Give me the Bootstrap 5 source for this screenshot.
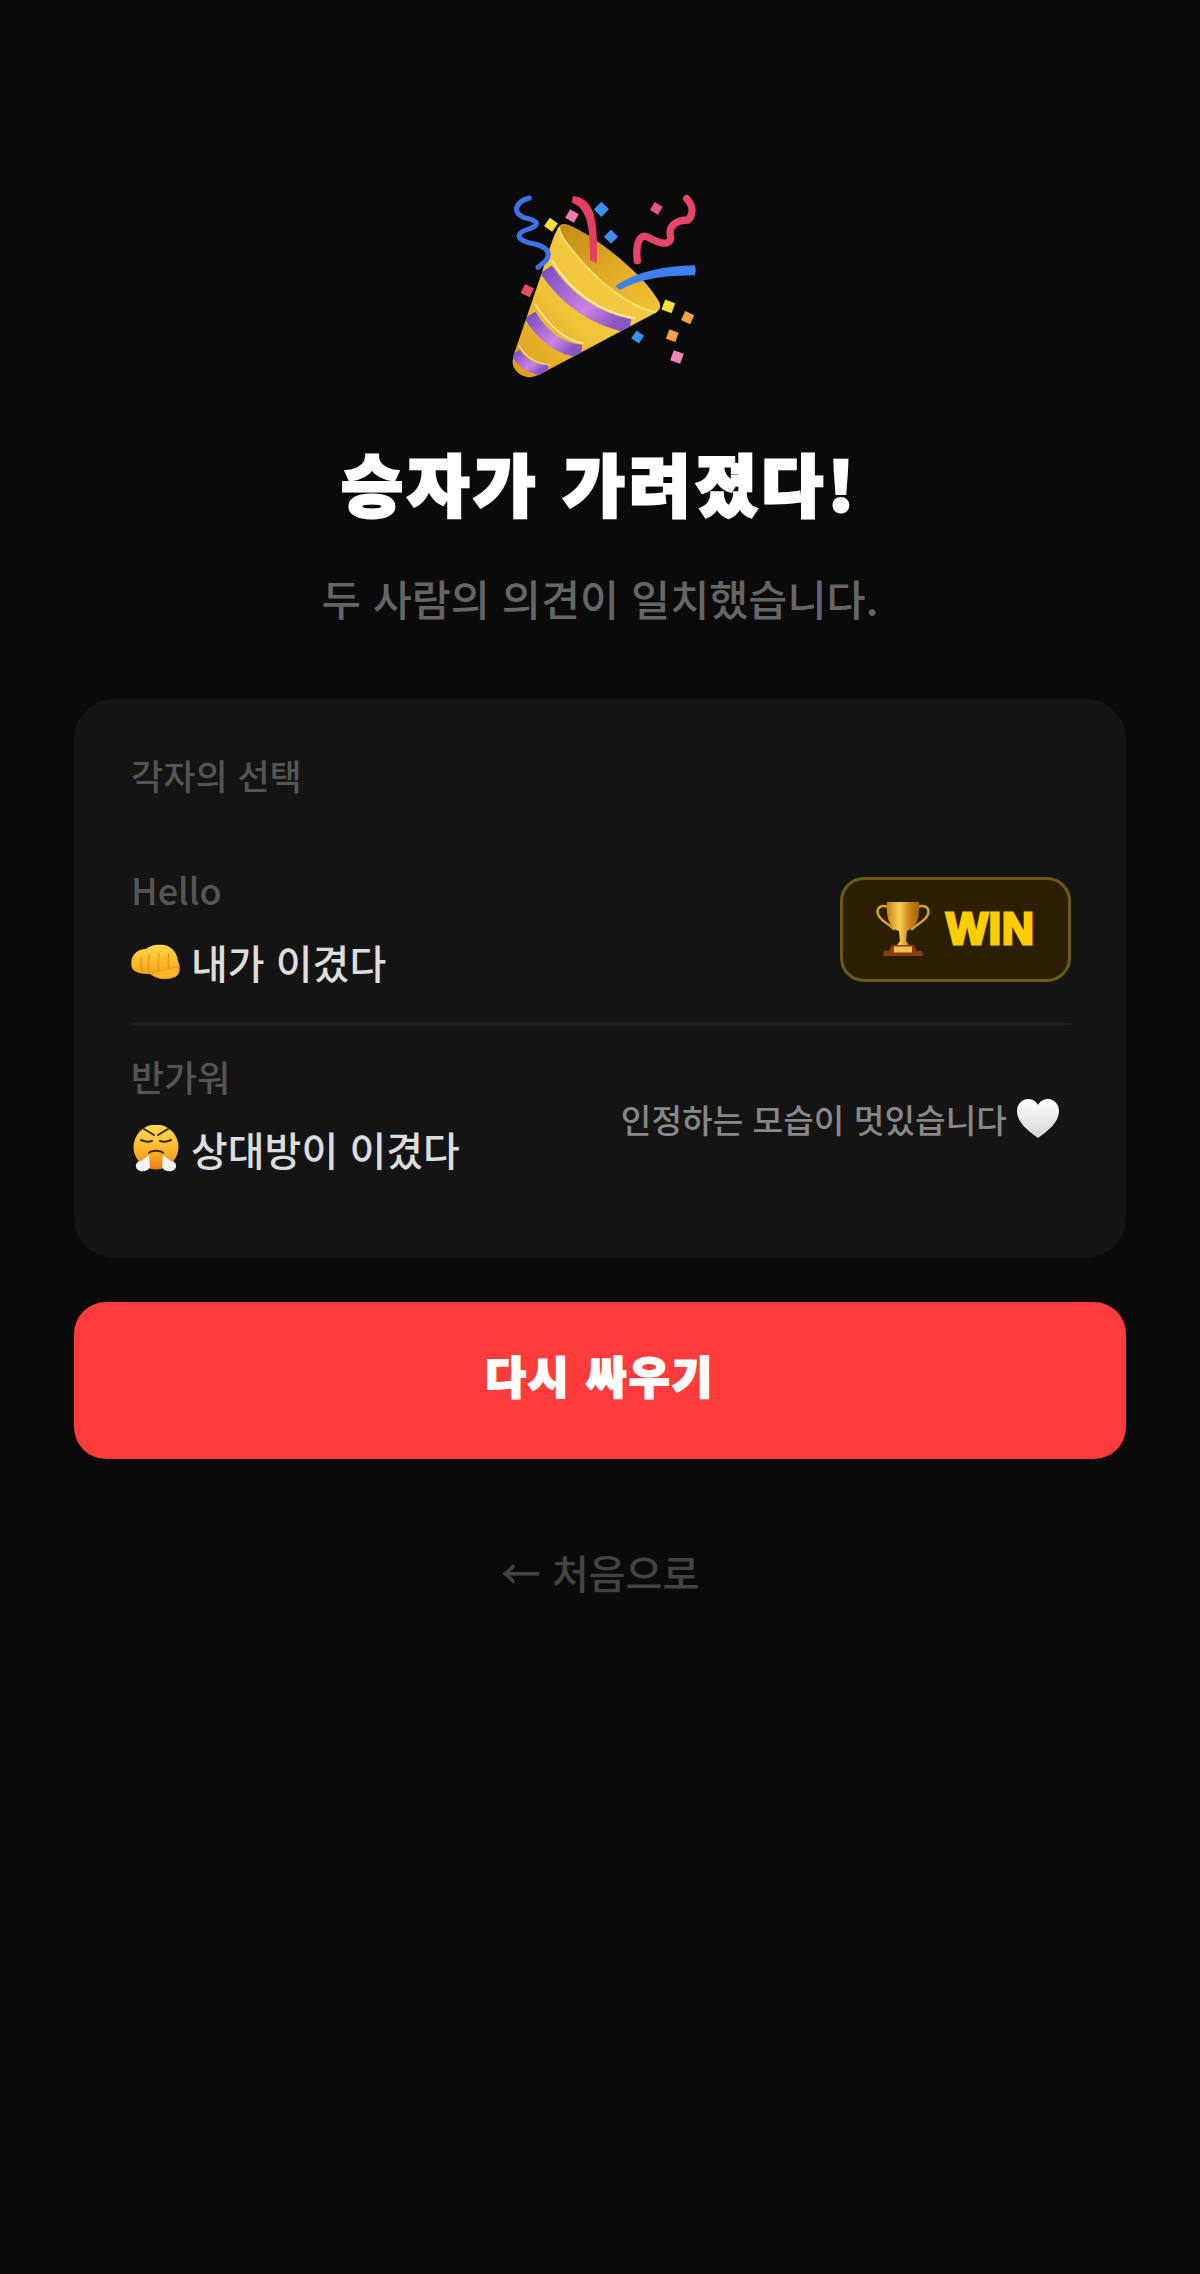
<!DOCTYPE html>
<html lang="ko">
<head>
<meta charset="utf-8">
<title>승자가 가려졌다</title>
<link rel="stylesheet" href="https://cdn.jsdelivr.net/npm/bootstrap@5.3.0/dist/css/bootstrap.min.css">
<style>
html,body{background:#0a0a0a;margin:0;}
body{font-family:"Noto Sans CJK KR","Noto Sans",sans-serif;min-height:2274px;}
.page-wrap{padding:150px 74px 0;}
.popper-art{display:block;width:320px;height:260px;margin:0 auto;}
.result-title{font-size:67px;line-height:80px;font-weight:900;color:#fff;margin:32px 0 0;-webkit-text-stroke:3px #fff;letter-spacing:4.5px;}
.result-sub{font-size:42.5px;line-height:60px;color:#666;font-weight:500;margin:46px 0 0;}
.pick-card{background:#141414;border:0;border-radius:40px;margin-top:71px;padding:51px 55px 48px 57px;}
.pick-label{font-size:35px;line-height:50px;color:#555;font-weight:500;margin-bottom:35px;}
.pick-row{padding:29px 0 33px;}
.pick-row + .pick-row{border-top:2px solid #222;padding-top:26px;}
.pick-name{font-size:36px;line-height:50px;color:#555;font-weight:500;}
.pick-choice{font-size:40px;line-height:56px;color:#ddd;font-weight:500;margin-top:20px;gap:10px;}
.win-tag{width:231px;height:105px;background:#2a2000;border:3px solid #6b5a12;border-radius:24px;gap:16px;color:#ffcc00;margin-top:4px;}
.win-word{font-family:"Liberation Sans",sans-serif;font-weight:700;font-size:44px;line-height:1;-webkit-text-stroke:3px #ffcc00;letter-spacing:1px;}
.cheer{font-size:33.3px;line-height:50px;color:#888;font-weight:500;gap:10px;padding-right:12px;margin-top:9px;}
.fight-btn{background:#ff3b3b;border:0;border-radius:32px;height:157px;width:100%;margin-top:44px;padding:0 0 12px;color:#fff;font-size:44px;font-weight:900;-webkit-text-stroke:2px #fff;letter-spacing:2.5px;}
.fight-btn:hover{background:#ff3b3b;color:#fff;}
.home-link{font-size:40px;line-height:60px;color:#444;font-weight:500;margin-top:83px;text-decoration:none;display:block;}
.home-link:hover{color:#444;}
</style>
</head>
<body>
<main class="page-wrap text-center">
  <svg class="popper-art" viewBox="0 0 960 780" aria-hidden="true">
    <defs>
      <linearGradient id="gold" x1="0" y1="1" x2="1" y2="0">
        <stop offset="0" stop-color="#d89a1c"/><stop offset=".4" stop-color="#f0c438"/><stop offset=".75" stop-color="#f4cc44"/><stop offset="1" stop-color="#d8a020"/>
      </linearGradient>
      <linearGradient id="inner" x1="0" y1="0" x2="1" y2="1">
        <stop offset="0" stop-color="#c08a18"/><stop offset=".5" stop-color="#e0aa24"/><stop offset="1" stop-color="#f4c436"/>
      </linearGradient>
      <linearGradient id="band" x1="0" y1="0" x2="1" y2=".7">
        <stop offset="0" stop-color="#7d4ec2"/><stop offset=".65" stop-color="#cc84e6"/><stop offset="1" stop-color="#8a55c4"/>
      </linearGradient>
      <clipPath id="coneclip"><path d="M358 228C345 245 330 290 305 370L222 612C212 642 220 664 250 678C268 686 290 680 320 662L640 492C664 480 664 466 655 452L640 430C600 370 480 270 400 232C385 224 368 218 358 228Z"/></clipPath>
    </defs>
    <path d="M358 228C345 245 330 290 305 370L222 612C212 642 220 664 250 678C268 686 290 680 320 662L640 492C664 480 664 466 655 452L640 430C600 370 480 270 400 232C385 224 368 218 358 228Z" fill="url(#gold)"/>
    <g clip-path="url(#coneclip)" fill="none">
      <path d="M335 330C390 420 470 485 585 505" stroke="#fff6c8" stroke-width="5" opacity=".85"/>
      <path d="M318 358C370 435 450 505 570 528" stroke="url(#band)" stroke-width="42"/>
      <path d="M285 462C325 525 370 570 430 580" stroke="#fff6c8" stroke-width="5" opacity=".75"/>
      <path d="M270 495C305 555 360 600 425 603" stroke="url(#band)" stroke-width="38"/>
      <path d="M236 585C255 620 285 640 330 645" stroke="#fff6c8" stroke-width="4" opacity=".75"/>
      <path d="M226 608C250 645 285 662 325 660" stroke="url(#band)" stroke-width="32"/>
    </g>
    <path d="M358 228C368 218 385 224 400 232C480 270 600 370 640 430L655 452C664 468 660 480 645 486C570 475 480 395 430 340C395 300 350 250 358 228Z" fill="url(#inner)"/>
    <path d="M358 232C356 255 395 300 430 340C480 395 570 475 648 486" fill="none" stroke="#f8dc6c" stroke-width="6"/>
    <path d="M398 138C425 140 450 155 462 195C472 240 472 290 470 340L450 330C450 280 448 235 438 205C428 178 415 165 396 158Z" fill="#e63e60"/>
    <path d="M525 408C590 365 670 348 765 346Q770 362 765 376C680 376 600 385 540 420Z" fill="#3f7ff0"/>
    <path d="M268 144C228 155 215 185 250 202C290 210 304 222 270 236C230 246 225 265 265 278C310 285 338 300 318 332L294 352" fill="none" stroke="#3d73e6" stroke-width="15" stroke-linecap="round"/>
    <path d="M592 332C586 280 600 248 625 262C660 282 692 288 692 262C682 225 712 210 745 210C762 190 758 165 740 146" fill="none" stroke="#e8446a" stroke-width="22" stroke-linecap="round" stroke-linejoin="round"/>
    <g>
      <rect x="468" y="162" width="32" height="32" transform="rotate(45 484 178)" fill="#3f8cf5"/>
      <rect x="498" y="245" width="30" height="30" transform="rotate(45 513 260)" fill="#3f8cf5"/>
      <rect x="579" y="547" width="28" height="28" transform="rotate(35 593 561)" fill="#3f8cf5"/>
      <rect x="381" y="183" width="30" height="30" transform="rotate(30 396 198)" fill="#ee7cab"/>
      <rect x="635" y="161" width="28" height="28" transform="rotate(30 649 175)" fill="#e8557f"/>
      <rect x="318" y="209" width="30" height="30" transform="rotate(35 333 224)" fill="#f8e03c"/>
      <rect x="247" y="407" width="30" height="30" transform="rotate(25 262 422)" fill="#e84b5e"/>
      <rect x="669" y="453" width="32" height="32" transform="rotate(20 685 469)" fill="#f8e03c"/>
      <rect x="728" y="488" width="30" height="30" transform="rotate(25 743 503)" fill="#f2a23c"/>
      <rect x="682" y="542" width="30" height="30" transform="rotate(20 697 557)" fill="#f2a23c"/>
      <rect x="695" y="605" width="32" height="32" transform="rotate(20 711 621)" fill="#f584b4"/>
    </g>
  </svg>
  <h1 class="result-title">승자가 가려졌다!</h1>
  <p class="result-sub">두 사람의 의견이 일치했습니다.</p>

  <section class="card pick-card text-start">
    <div class="pick-label">각자의 선택</div>
    <div class="pick-row d-flex justify-content-between align-items-center">
      <div>
        <div class="pick-name">Hello</div>
        <div class="pick-choice d-flex align-items-center">
          <svg width="50" height="36" viewBox="0 0 50 36" aria-hidden="true">
            <defs>
              <linearGradient id="fistg" x1="0" y1="0" x2="0" y2="1"><stop offset="0" stop-color="#ffd94a"/><stop offset=".6" stop-color="#fcb424"/><stop offset="1" stop-color="#f09a14"/></linearGradient>
            </defs>
            <path d="M1 14C4 7 10 5 15 5C19 1 27 0 33 1C40 2 46 8 47 17C50 24 49 30 44 33C36 36 26 36 19 30C12 30 3 29 1 24C0 21 0 17 1 14Z" fill="url(#fistg)"/>
            <path d="M10 14C9 19 10 24 11 27M18 11C17 18 17 24 18 29M28 10C27 17 27 23 28 28M38 10C37 16 37 20 38 25" fill="none" stroke="#e8921a" stroke-width="1.8" stroke-linecap="round" opacity=".75"/>
            <path d="M21 30C28 26 38 25 47 23C49 28 47 32 43 33C35 36 26 35 21 30Z" fill="#fdb426" stroke="#e8921a" stroke-width=".8"/>
          </svg>
          <span>내가 이겼다</span>
        </div>
      </div>
      <div class="win-tag d-flex align-items-center justify-content-center">
        <svg width="54" height="56" viewBox="0 0 54 56" aria-hidden="true">
          <defs>
            <linearGradient id="cupg" x1="0" y1="0" x2="1" y2="0"><stop offset="0" stop-color="#c48214"/><stop offset=".4" stop-color="#f8d050"/><stop offset=".7" stop-color="#c88414"/><stop offset="1" stop-color="#a8640c"/></linearGradient>
          </defs>
          <path d="M13 6C5 3 0 7 2 13C4 20 12 22 18 28M41 6C49 3 54 7 52 13C50 20 42 22 36 28" fill="none" stroke="#d8a030" stroke-width="2.6" stroke-linecap="round"/>
          <path d="M11 1H43C44 14 42 26 31 30L30 40L33 44H21L24 40L23 30C12 26 10 14 11 1Z" fill="url(#cupg)"/>
          <path d="M16 44H38L41 50H46L47 55H7L8 50H13Z" fill="#8a3e10"/>
          <rect x="18" y="45.500" width="18" height="6" fill="#f0c050"/>
        </svg>
        <span class="win-word">WIN</span>
      </div>
    </div>
    <div class="pick-row d-flex justify-content-between align-items-center">
      <div>
        <div class="pick-name">반가워</div>
        <div class="pick-choice d-flex align-items-center">
          <svg width="50" height="48" viewBox="0 0 50 48" aria-hidden="true">
            <defs>
              <linearGradient id="faceg" x1="0" y1="0" x2="0" y2="1"><stop offset="0" stop-color="#ffdc50"/><stop offset=".6" stop-color="#fbb42a"/><stop offset="1" stop-color="#f07c14"/></linearGradient>
            </defs>
            <circle cx="25" cy="22" r="22.500" fill="url(#faceg)"/>
            <path d="M13 4L23 10M37 4L27 10" stroke="#3e2510" stroke-width="2" stroke-linecap="round"/>
            <path d="M10 15C14 17 18 17 21 16M40 15C36 17 32 17 29 16" fill="none" stroke="#3e2510" stroke-width="2" stroke-linecap="round"/>
            <path d="M18 28C20 25 30 25 32 28" fill="none" stroke="#3e2510" stroke-width="2" stroke-linecap="round"/>
            <path d="M18 30C19 35 18 38 19 42C17 47 10 47 7 45C3 42 5 36 10 36C13 34 15 32 18 30ZM32 30C31 35 32 38 31 42C33 47 40 47 43 45C47 42 45 36 40 36C37 34 35 32 32 30Z" fill="#f4f4f4"/>
          </svg>
          <span>상대방이 이겼다</span>
        </div>
      </div>
      <div class="cheer d-flex align-items-center">
        <span>인정하는 모습이 멋있습니다</span>
        <svg width="42" height="40" viewBox="0 0 42 40" aria-hidden="true">
          <defs><linearGradient id="heartg" x1="0" y1="0" x2="0" y2="1"><stop offset="0" stop-color="#ffffff"/><stop offset="1" stop-color="#d6d6d6"/></linearGradient></defs>
          <path d="M21 39C10 31 0 23 0 12C0 5 5 0 11 0C15 0 19 2 21 6C23 2 27 0 31 0C37 0 42 5 42 12C42 23 32 31 21 39Z" fill="url(#heartg)"/>
        </svg>
      </div>
    </div>
  </section>

  <button type="button" class="btn fight-btn">다시 싸우기</button>
  <a class="home-link" href="#">← 처음으로</a>
</main>
<script src="https://cdn.jsdelivr.net/npm/bootstrap@5.3.0/dist/js/bootstrap.bundle.min.js"></script>
</body>
</html>
